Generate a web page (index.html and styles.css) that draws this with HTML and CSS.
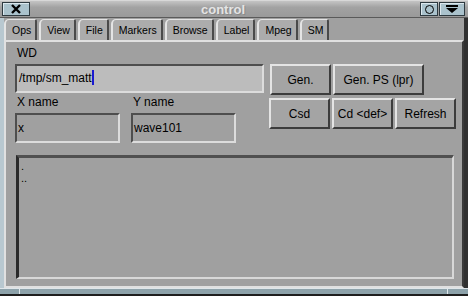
FILE: index.html
```html
<!DOCTYPE html>
<html>
<head>
<meta charset="utf-8">
<link rel="stylesheet" href="styles.css">
</head>
<body>
<div class="win">
  <div class="titlebar">
    <div class="tb close"><svg width="12" height="10" viewBox="0 0 12 10"><path d="M2 1 L10 9 M10 1 L2 9" stroke="#000" stroke-width="2.4"/></svg></div>
    <div class="ttext">control</div>
    <div class="tb circ"><span class="ring"></span></div>
    <div class="tb menu"><svg width="14" height="10" viewBox="0 0 14 10"><rect x="1" y="1" width="12" height="2" fill="#000"/><path d="M1 4 H13 L7 9 Z" fill="#000"/></svg></div>
  </div>
  <div class="frame">
    <div class="tabs">
      <div class="tab">Ops</div>
      <div class="tab">View</div>
      <div class="tab">File</div>
      <div class="tab">Markers</div>
      <div class="tab">Browse</div>
      <div class="tab">Label</div>
      <div class="tab">Mpeg</div>
      <div class="tab active">SM</div>
    </div>
    <div class="panel">
      <div class="top">
        <div class="left">
          <div class="lbl">WD</div>
          <div class="input wd">/tmp/sm_matt<span class="caret"></span></div>
          <div class="names">
            <div class="field">
              <div class="lbl">X name</div>
              <div class="input small">x</div>
            </div>
            <div class="field">
              <div class="lbl">Y name</div>
              <div class="input small">wave101</div>
            </div>
          </div>
        </div>
        <div class="right">
          <div class="brow">
            <div class="btn b1">Gen.</div>
            <div class="btn b2">Gen. PS (lpr)</div>
          </div>
          <div class="brow">
            <div class="btn b3">Csd</div>
            <div class="btn b3">Cd &lt;def&gt;</div>
            <div class="btn b3">Refresh</div>
          </div>
        </div>
      </div>
      <div class="list">
        <div class="item">.</div>
        <div class="item">..</div>
      </div>
    </div>
  </div>
  <div class="status">
    <div class="seg s1"></div>
    <div class="seg s2"></div>
    <div class="seg s3"></div>
  </div>
</div>
</body>
</html>
```
FILE: styles.css
```css
* { box-sizing: border-box; }
html, body { margin: 0; padding: 0; }
body {
  width: 468px;
  height: 296px;
  overflow: hidden;
  background: #2a2a2a;
  font-family: "Liberation Sans", Arial, sans-serif;
  font-size: 12px;
  color: #000;
}
.win {
  width: 468px;
  height: 296px;
  display: flex;
  flex-direction: column;
  background: #a0a0a0;
  border-bottom: 2px solid #1e1e1e;
}
.titlebar {
  height: 18px;
  display: flex;
  align-items: center;
  padding: 0 3px 0 2px;
  background: linear-gradient(#c4c4c4, #a2a2a2 40%, #9a9a9a);
  border-top: 1px solid #d8d8d8;
  border-bottom: 1px solid #5a5a5a;
}
.tb {
  height: 14px;
  background: #aac2cc;
  border: 1px solid #2e3a40;
  box-shadow: inset 1px 1px 0 #dce8ee;
  display: flex;
  align-items: center;
  justify-content: center;
}
.close { width: 28px; }
.circ { width: 18px; }
.menu { width: 26px; margin-left: 1px; }
.ring {
  width: 9px; height: 9px;
  border: 1px solid #000;
  border-radius: 50%;
}
.ttext {
  flex: 1;
  text-align: center;
  font-weight: bold;
  font-size: 13px;
  color: #e4e4e4;
  text-shadow: 1px 1px 0 #8a8a8a;
  padding-right: 4px;
}
.frame {
  flex: 1;
  display: flex;
  flex-direction: column;
  border-left: 4px solid #b8c8d0;
  border-right: 4px solid #303030;
  background: #a0a0a0;
}
.tabs {
  height: 22px;
  display: flex;
  align-items: flex-end;
  gap: 2px;
  padding-left: 0;
  background: #a0a0a0;
}
.tab {
  height: 21px;
  padding: 4px 4px 0 6px;
  font-size: 10.5px;
  background: #acacac;
  border-left: 2px solid #e4e4e4;
  border-top: 1px solid #e4e4e4;
  border-right: 2px solid #4a4a4a;
  border-top-left-radius: 5px;
  border-top-right-radius: 2px;
}
.panel {
  flex: 1;
  display: flex;
  flex-direction: column;
  background: #a0a0a0;
  border-top: 2px solid #e0e0e0;
  border-left: 2px solid #e0e0e0;
  border-right: 2px solid #3a3a3a;
  border-bottom: 2px solid #e0e0e0;
  padding: 4px 2px 4px 9px;
}
.top {
  display: flex;
  gap: 5px;
}
.left {
  width: 249px;
  flex-shrink: 0;
  display: flex;
  flex-direction: column;
}
.lbl {
  height: 14px;
  line-height: 14px;
  padding-left: 2px;
  margin-bottom: 4px;
}
.input {
  height: 29px;
  border-top: 2px solid #4e4e4e;
  border-left: 2px solid #4e4e4e;
  border-bottom: 2px solid #dcdcdc;
  border-right: 2px solid #dcdcdc;
  padding-left: 1px;
  line-height: 25px;
  background: #a0a0a0;
}
.input.wd {
  background: #bcbcbc;
  padding-left: 2px;
}
.caret {
  display: inline-block;
  width: 2px;
  height: 15px;
  background: #1a1ad0;
  vertical-align: -3px;
}
.names {
  margin-top: 2px;
  display: flex;
  gap: 11px;
}
.field { width: 105px; }
.input.small { height: 30px; line-height: 27px; }
.right {
  flex-shrink: 0;
  padding-top: 18px;
  display: flex;
  flex-direction: column;
  gap: 3px;
}
.brow { display: flex; gap: 2px; }
.btn {
  height: 31px;
  flex-shrink: 0;
  display: flex;
  align-items: center;
  justify-content: center;
  background: #a4a4a4;
  border-top: 2px solid #e4e4e4;
  border-left: 2px solid #e4e4e4;
  border-right: 2px solid #3c3c3c;
  border-bottom: 2px solid #3c3c3c;
  padding-top: 1px;
}
.b1 { width: 61px; margin-left: 1px; }
.b2 { width: 91px; }
.b3 { width: 61px; }
.list {
  margin: 12px 6px 0 1px;
  height: 124px;
  border-top: 3px solid #505050;
  border-left: 3px solid #2a2a2a;
  border-right: 2px solid #d8d8d8;
  border-bottom: 2px solid #d8d8d8;
  padding: 2px 0 0 2px;
  font-size: 11px;
  line-height: 12px;
}
.status {
  height: 6px;
  display: flex;
  background: #8da2aa;
  border-top: 1px solid #dfe6ea;
}
.seg { height: 100%; }
.s1 { width: 20px; border-right: 1px solid #e0e8ec; }
.s2 { flex: 1; border-right: 1px solid #e0e8ec; }
.s3 { width: 20px; }
```
